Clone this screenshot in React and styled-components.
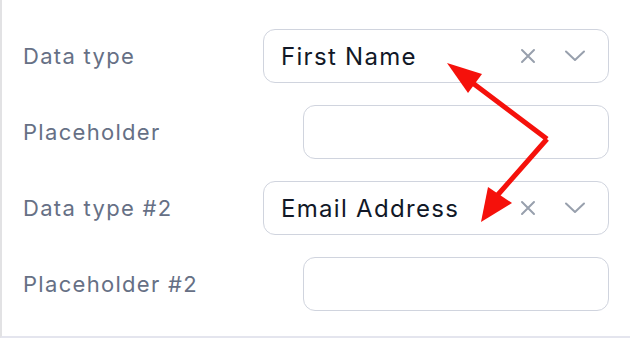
import React from "react";
import styled, { createGlobalStyle } from "styled-components";

const GlobalStyle = createGlobalStyle`
  html, body {
    margin: 0;
    background: #ffffff;
    font-family: Inter, "Noto Sans", sans-serif;
  }
`;

const Panel = styled.div`
  position: relative;
  width: 630px;
  height: 338px;
  box-sizing: border-box;
  border-left: 2px solid #e2e2e4;
  border-bottom: 2px solid #e4e5ee;
  padding: 29px 21px 0 21px;
  display: flex;
  flex-direction: column;
  gap: 22px;
`;

const Row = styled.div`
  display: flex;
  align-items: center;
  justify-content: space-between;
  height: 54px;
`;

const Label = styled.span`
  font-size: 22px;
  letter-spacing: 1.3px;
  color: #667085;
`;

const Field = styled.div`
  box-sizing: border-box;
  width: ${(p) => p.$width}px;
  height: 54px;
  border: 1.5px solid #d0d4de;
  border-radius: 12px;
  background: #fff;
  display: flex;
  align-items: center;
  padding: 0 22px 0 17px;
`;

const Value = styled.span`
  flex: 1;
  font-size: 24px;
  letter-spacing: 1.3px;
  color: #111827;
`;

const Icons = styled.div`
  display: flex;
  align-items: center;
  gap: 28px;
`;

const Overlay = styled.svg`
  position: absolute;
  left: -2px;
  top: 0;
  pointer-events: none;
`;

const ClearIcon = () => (
  <svg width="16" height="16" viewBox="0 0 16 16">
    <path d="M2 2L14 14M14 2L2 14" stroke="#98a0ad" strokeWidth="2" strokeLinecap="round" />
  </svg>
);

const ChevronIcon = () => (
  <svg width="22" height="12" viewBox="0 0 22 12">
    <path d="M2 1.5L11 10L20 1.5" stroke="#98a0ad" strokeWidth="2" fill="none" strokeLinecap="round" strokeLinejoin="round" />
  </svg>
);

const Select = ({ value }) => (
  <Field $width={346}>
    <Value>{value}</Value>
    <Icons>
      <ClearIcon />
      <ChevronIcon />
    </Icons>
  </Field>
);

const rows = [
  { label: "Data type", select: "First Name" },
  { label: "Placeholder" },
  { label: "Data type #2", select: "Email Address" },
  { label: "Placeholder #2" },
];

export default function App() {
  return (
    <>
      <GlobalStyle />
      <Panel>
        {rows.map((r) => (
          <Row key={r.label}>
            <Label>{r.label}</Label>
            {r.select ? <Select value={r.select} /> : <Field $width={306} />}
          </Row>
        ))}
        <Overlay width="640" height="342" viewBox="0 0 640 342">
          <path d="M547 139L470 81M547 139L495 198" stroke="#f5110b" strokeWidth="5" strokeLinejoin="round" fill="none" />
          <polygon points="447,63 482,74 468,93" fill="#f5110b" />
          <polygon points="481,222 488,187 512,203" fill="#f5110b" />
        </Overlay>
      </Panel>
    </>
  );
}
